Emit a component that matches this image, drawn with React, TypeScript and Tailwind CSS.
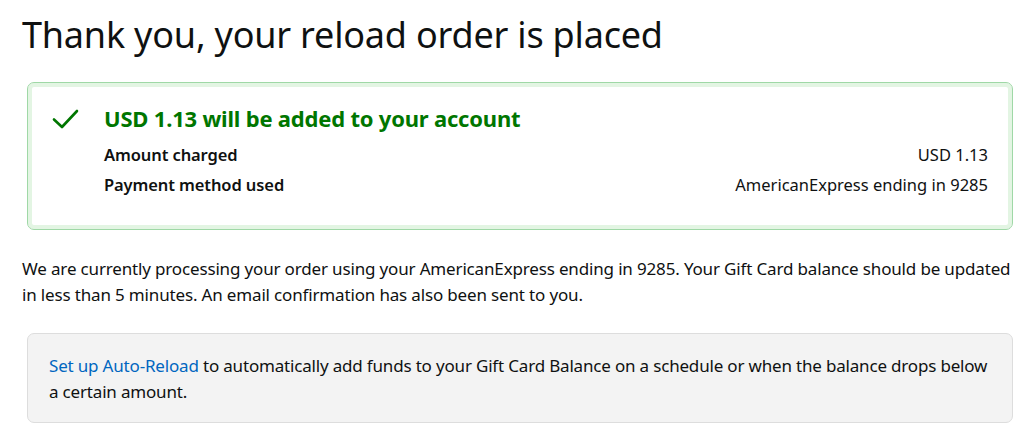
import React from "react";

export default function App() {
  return (
    <div
      className="w-[1024px] h-[443px] bg-white text-[#0f1111] overflow-hidden"
      style={{ fontFamily: '"Noto Sans", "Open Sans", sans-serif' }}
    >
      <div className="pl-[22px] pr-[11px] pt-[12px]">
        <h1 className="text-[36px] leading-[46px] font-normal tracking-[-0.2px]">
          Thank you, your reload order is placed
        </h1>

        <div className="mt-[24px] ml-[5px] rounded-[7px] border border-[#9fd8a6] shadow-[inset_0_0_0_4px_#e3f5e3] pl-[24px] pr-[24px] pt-[20px] pb-[29px] flex gap-[24px]">
          <div className="w-[28px] pt-[4px] shrink-0">
            <svg width="28" height="24" viewBox="0 0 28 24" fill="none">
              <path d="M2 12.5 L10 20 L25 4" stroke="#007600" strokeWidth="2.6" strokeLinecap="round" strokeLinejoin="round" />
            </svg>
          </div>
          <div className="flex-1">
            <div className="text-[22px] leading-[30px] font-bold text-[#007600] tracking-[-0.2px]">
              USD 1.13 will be added to your account
            </div>
            <div className="mt-[7px] flex justify-between text-[16.5px] leading-[30px]">
              <span className="font-semibold tracking-[-0.1px]">Amount charged</span>
              <span>USD 1.13</span>
            </div>
            <div className="flex justify-between text-[16.5px] leading-[30px]">
              <span className="font-semibold tracking-[-0.1px]">Payment method used</span>
              <span>AmericanExpress ending in 9285</span>
            </div>
          </div>
        </div>

        <p className="mt-[26px] text-[17px] leading-[26px] tracking-[-0.16px] whitespace-nowrap">
          We are currently processing your order using your AmericanExpress ending in 9285. Your Gift Card balance should be updated
          <br />
          in less than 5 minutes. An email confirmation has also been sent to you.
        </p>

        <div className="mt-[25px] ml-[5px] rounded-[7px] border border-[#dddddd] bg-[#f3f3f3] pl-[21px] pr-[8px] pt-[19px] pb-[17px] text-[17px] leading-[26px] tracking-[-0.18px] whitespace-nowrap">
          <a className="text-[#0066c0]">Set up Auto-Reload</a> to automatically add funds to your Gift Card Balance on a schedule or when the balance drops below
          <br />
          a certain amount.
        </div>
      </div>
    </div>
  );
}
